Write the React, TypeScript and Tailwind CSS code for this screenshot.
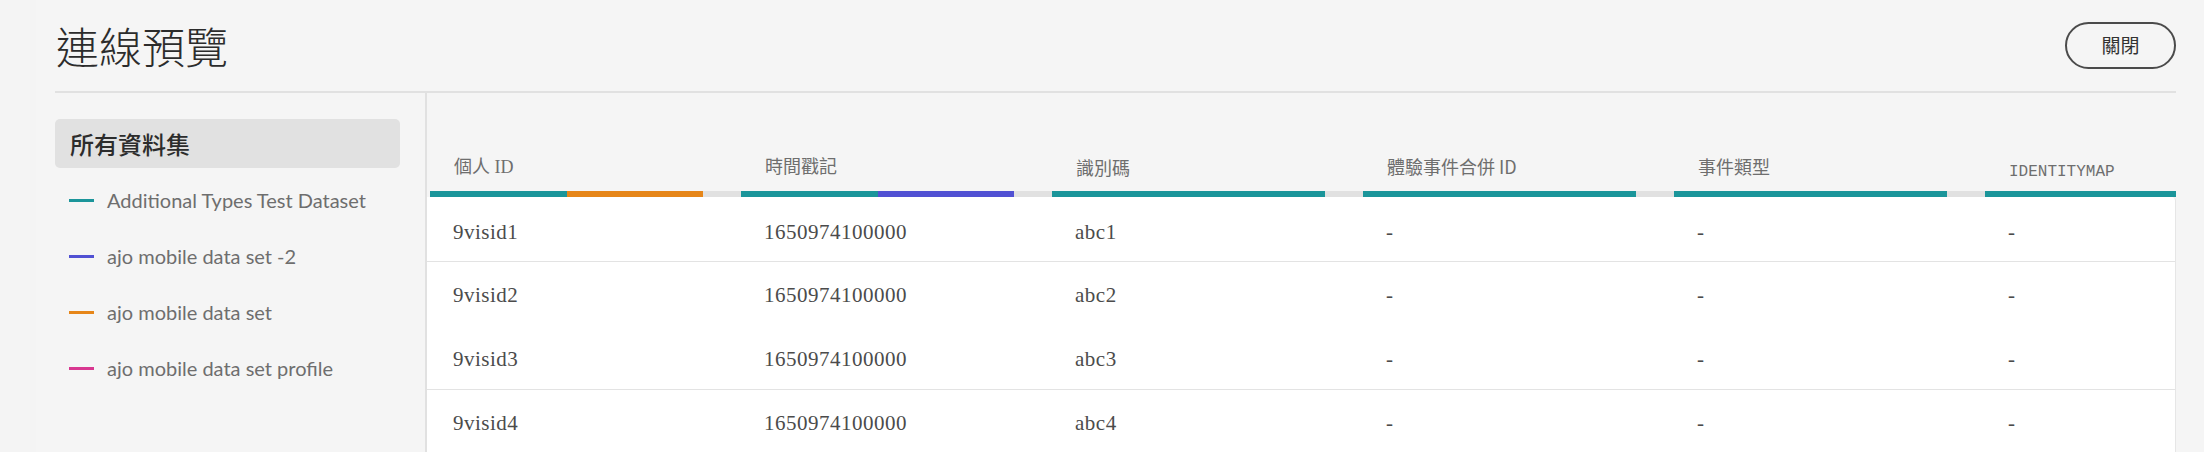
import React from "react";

const CJK = "font-['Noto_Sans_CJK_TC','Noto_Sans',sans-serif]";
const SERIF = "font-['Liberation_Serif','Noto_Sans_CJK_TC',serif]";

const datasets = [
    { name: "Additional Types Test Dataset", color: "bg-[#1b959a]" },
    { name: "ajo mobile data set -2", color: "bg-[#5151d3]" },
    { name: "ajo mobile data set", color: "bg-[#e68619]" },
    { name: "ajo mobile data set profile", color: "bg-[#d83790]" },
];

const columns = [
    { label: "個人 ID", font: SERIF + " text-[18px] pb-[15px]", bars: ["bg-[#1b959a]", "bg-[#e68619]"], gap: true },
    { label: "時間戳記", font: SERIF + " text-[18px] pb-[15px]", bars: ["bg-[#1b959a]", "bg-[#5151d3]"], gap: true },
    { label: "識別碼", font: CJK + " text-[18px] pb-[15px]", bars: ["bg-[#1b959a]"], gap: true },
    { label: "體驗事件合併 ID", font: CJK + " text-[18px] pb-[16px]", bars: ["bg-[#1b959a]"], gap: true },
    { label: "事件類型", font: CJK + " text-[18px] pb-[16px]", bars: ["bg-[#1b959a]"], gap: true },
    { label: "IDENTITYMAP", font: "font-['Liberation_Mono',monospace] text-[16px] pb-[10px]", bars: ["bg-[#1b959a]"], gap: false },
];

const rows = [
    { id: "9visid1", ts: "1650974100000", code: "abc1", h: "h-[65px] pt-[7px] border-b border-[#e3e3e3]" },
    { id: "9visid2", ts: "1650974100000", code: "abc2", h: "h-[64px] pt-[4px]" },
    { id: "9visid3", ts: "1650974100000", code: "abc3", h: "h-[64px] pt-[4px] border-b border-[#e3e3e3]" },
    { id: "9visid4", ts: "1650974100000", code: "abc4", h: "h-[64px] pt-[4px]" },
];

export default function App() {
    return (
        <div className="flex h-[452px] w-full overflow-hidden bg-[#f4f4f4]">
            <div className="w-[36px] shrink-0" />
            <div className="flex min-w-0 flex-1 flex-col bg-[#f5f5f5] pl-[19px] pr-[28px]">
                <header className="flex h-[91px] shrink-0 items-center justify-between">
                    <h1 className={`${CJK} pl-[1px] text-[43px] font-light leading-none text-[#2c2c2c]`}>連線預覽</h1>
                    <button className={`${CJK} h-[47px] w-[111px] rounded-full border-2 border-[#4b4b4b] text-[19px] text-[#323232]`}>
                        關閉
                    </button>
                </header>
                <div className="h-[2px] shrink-0 bg-[#e1e1e1]" />

                <div className="flex min-h-0 flex-1">
                    <aside className="w-[370px] shrink-0 pr-[25px] pt-[26px]">
                        <div className={`${CJK} flex h-[49px] items-center rounded-[5px] bg-[#e1e1e1] px-[15px] text-[24px] font-medium text-[#2c2c2c]`}>
                            所有資料集
                        </div>
                        <ul className="mt-[4px]">
                            {datasets.map((d) => (
                                <li key={d.name} className="flex h-[56px] items-center gap-[13px] pl-[14px]">
                                    <span className={`h-[3px] w-[25px] ${d.color}`} />
                                    <span className="font-['Lato',sans-serif] text-[20px] text-[#6e6e6e]">{d.name}</span>
                                </li>
                            ))}
                        </ul>
                    </aside>
                    <div className="w-[2px] shrink-0 bg-[#e1e1e1]" />

                    <section className="flex min-w-0 flex-1 flex-col">
                        <div className="grid h-[98px] shrink-0 grid-cols-[repeat(5,311px)_1fr] pl-[3px]">
                            {columns.map((c) => (
                                <div key={c.label} className="flex flex-col justify-end">
                                    <div className={`${c.font} pl-[24px] leading-[18px] text-[#6e6e6e]`}>{c.label}</div>
                                </div>
                            ))}
                        </div>
                        <div className="grid h-[6px] shrink-0 grid-cols-[repeat(5,311px)_1fr] pl-[3px]">
                            {columns.map((c) => (
                                <div key={c.label} className="flex">
                                    <div className={`flex ${c.gap ? "w-[273px]" : "flex-1"}`}>
                                        {c.bars.map((b, i) => (
                                            <div key={i} className={`flex-1 ${b}`} />
                                        ))}
                                    </div>
                                    {c.gap && <div className="flex-1 bg-[#e1e1e1]" />}
                                </div>
                            ))}
                        </div>
                        <div className="min-h-0 flex-1 rounded-tr-[4px] border-r border-[#e6e6e6] bg-white">
                            {rows.map((r) => (
                                <div
                                    key={r.id}
                                    className={`grid grid-cols-[repeat(5,311px)_1fr] items-center pl-[3px] ${SERIF} text-[21px] tracking-[0.5px] text-[#4b4b4b] ${r.h}`}
                                >
                                    <div className="pl-[23px]">{r.id}</div>
                                    <div className="pl-[23px]">{r.ts}</div>
                                    <div className="pl-[23px]">{r.code}</div>
                                    <div className="pl-[23px]">-</div>
                                    <div className="pl-[23px]">-</div>
                                    <div className="pl-[23px]">-</div>
                                </div>
                            ))}
                        </div>
                    </section>
                </div>
            </div>
        </div>
    );
}
